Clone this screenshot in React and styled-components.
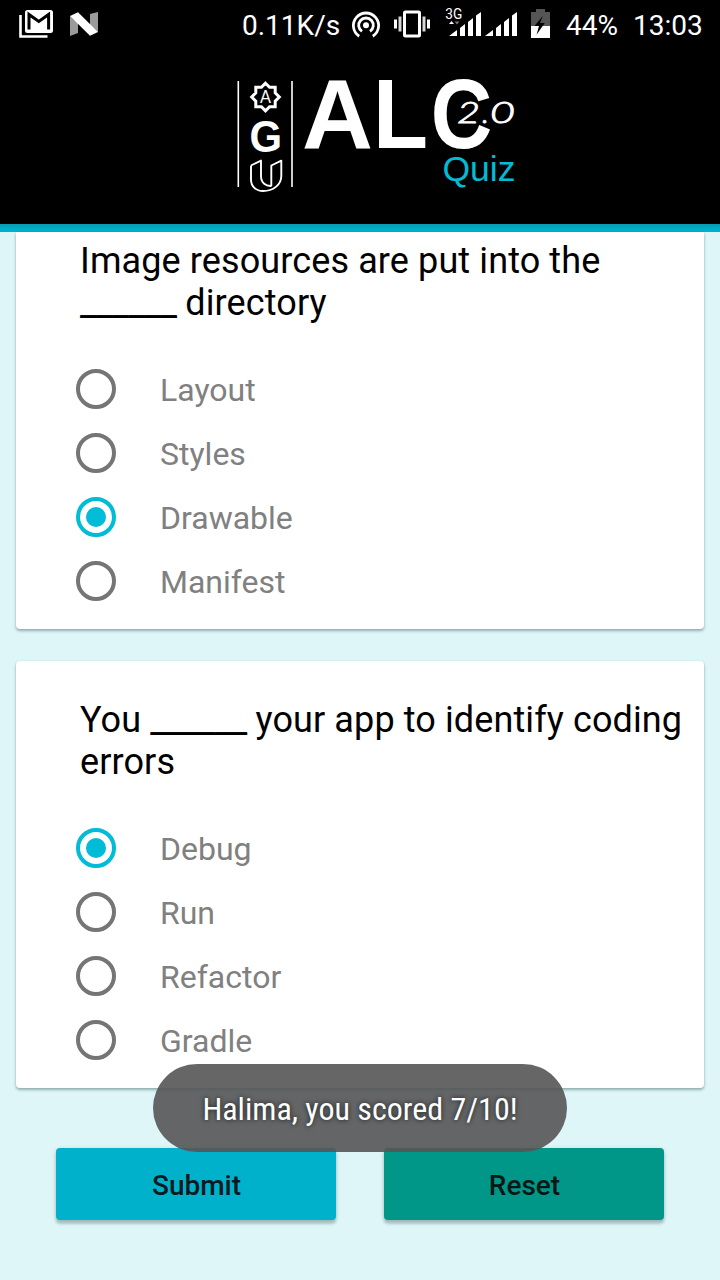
import React from 'react';
import styled, { createGlobalStyle } from 'styled-components';

const GlobalStyle = createGlobalStyle`
  * { box-sizing: border-box; }
  body { margin: 0; font-family: Roboto, "Liberation Sans", sans-serif; background: #dff6f8; }
`;

const Screen = styled.div`
  position: relative;
  width: 720px;
  height: 1280px;
  overflow: hidden;
  display: flex;
  flex-direction: column;
  background: #dff6f8;
`;

const StatusBar = styled.div`
  height: 48px;
  flex: none;
  background: #000;
  color: #fff;
  display: flex;
  align-items: center;
  justify-content: space-between;
  padding: 0 15px 0 18px;
`;

const StatusGroup = styled.div`
  display: flex;
  align-items: center;
  height: 48px;
`;

const StatusText = styled.span`
  font-size: 28px;
  line-height: 32px;
  padding-top: 3px;
  width: ${(p) => p.$width}px;
  margin-right: ${(p) => p.$gap || 0}px;
  white-space: nowrap;
`;

const StatusIcon = styled.svg`
  display: block;
  flex: none;
  height: 48px;
  margin-right: ${(p) => p.$gap || 0}px;
`;

const Header = styled.header`
  height: 176px;
  flex: none;
  background: #000;
  display: flex;
  justify-content: center;
  padding: 8px 0 0 32px;
`;

const AccentBar = styled.div`
  height: 8px;
  flex: none;
  background: linear-gradient(#079bb0, #00aec8 60%, #00b1cc);
`;

const Content = styled.main`
  display: flex;
  flex-direction: column;
  padding: 0 16px;
`;

const Card = styled.section`
  background: #fff;
  border-radius: ${(p) => (p.$scrolled ? '0 0 4px 4px' : '4px')};
  padding: ${(p) => (p.$scrolled ? 8 : 38)}px 16px 16px 64px;
  margin-bottom: ${(p) => p.$gap}px;
  box-shadow: 0 2px 3px rgba(0, 40, 45, 0.34), 0 0 2px rgba(0, 40, 45, 0.1);
`;

const Question = styled.h2`
  margin: 0 0 33px;
  font-size: 36px;
  font-weight: 400;
  line-height: 42px;
  letter-spacing: 0.11px;
  color: #000;
  white-space: pre-line;
`;

const Blank = styled.span`
  letter-spacing: -0.2px;
  text-shadow: 0.5px 0 0 #000;
`;

const Option = styled.label`
  display: flex;
  align-items: center;
  height: 64px;
  margin-left: -4px;
  gap: 44px;
  font-size: 32px;
  line-height: 38px;
  color: #808080;
`;

const OptionText = styled.span`
  padding-top: 2px;
`;

const Radio = styled.span`
  width: 40px;
  height: 40px;
  flex: none;
  border-radius: 50%;
  border: 4px solid ${(p) => (p.$checked ? '#00bcd6' : '#757575')};
  display: flex;
  align-items: center;
  justify-content: center;
`;

const RadioDot = styled.span`
  width: 20px;
  height: 20px;
  border-radius: 50%;
  background: #00bcd6;
`;

const Actions = styled.div`
  display: flex;
  gap: 48px;
  padding: 0 40px;
`;

const ActionButton = styled.button`
  width: 280px;
  height: 72px;
  padding: 3px 0 0 1px;
  border: 0;
  border-radius: 4px;
  background: ${(p) => p.$color};
  color: rgba(0, 0, 0, 0.87);
  font: 500 28px/32px Roboto, "Liberation Sans", sans-serif;
  box-shadow: 0 4px 3px rgba(0, 30, 35, 0.2), 0 1px 4px rgba(0, 30, 35, 0.16);
`;

const Toast = styled.div`
  position: absolute;
  left: 153px;
  top: 1064px;
  width: 414px;
  height: 88px;
  border-radius: 44px;
  background: rgba(85, 85, 85, 0.9);
  color: #fff;
  display: flex;
  align-items: center;
  justify-content: center;
  padding-top: 1px;
  font-family: "Roboto Condensed", Roboto, sans-serif;
  font-stretch: condensed;
  font-size: 32px;
  line-height: 38px;
  white-space: nowrap;
  text-shadow: 0 0 5px rgba(0, 0, 0, 0.75);
`;

const questions = [
  {
    before: 'Image resources are put into the\n',
    after: ' directory',
    options: ['Layout', 'Styles', 'Drawable', 'Manifest'],
    answer: 'Drawable',
    scrolled: true,
    gap: 32,
  },
  {
    before: 'You ',
    after: ' your app to identify coding\nerrors',
    options: ['Debug', 'Run', 'Refactor', 'Gradle'],
    answer: 'Debug',
    gap: 60,
  },
];

function MailIcon() {
  return (
    <StatusIcon width="36" viewBox="18 0 36 48" $gap={15}>
      <path d="M20.5 15V36.5H47.5" fill="none" stroke="#fff" strokeWidth="2.6" />
      <rect x="25" y="10" width="28" height="23" rx="2.5" fill="#fff" />
      <path d="M29 29.5V14.5L38.8 21.5L48.6 14.5V29.5" fill="none" stroke="#000" strokeWidth="3" />
    </StatusIcon>
  );
}

function NougatIcon() {
  return (
    <StatusIcon width="30" viewBox="69 0 30 48">
      <path d="M70 16L78 23V33L70 36ZM90 14L98 12V32L90 25Z" fill="#9b9b9b" />
      <path d="M70 16L78 12.3L98 32L90 35.8Z" fill="#fff" />
    </StatusIcon>
  );
}

function HotspotIcon() {
  return (
    <StatusIcon width="30" viewBox="351 0 30 48" $gap={12}>
      <g fill="none" stroke="#fff" strokeWidth="2.8">
        <path d="M359.2 36.2A12.6 12.6 0 1 1 372.8 36.2" />
        <path d="M362 31.4A7.3 7.3 0 1 1 370 31.4" />
      </g>
      <circle cx="366" cy="25.2" r="3" fill="#fff" />
    </StatusIcon>
  );
}

function VibrateIcon() {
  return (
    <StatusIcon width="38" viewBox="393 0 38 48" $gap={14}>
      <rect x="404.5" y="12" width="15" height="24" rx="1" fill="none" stroke="#fff" strokeWidth="3" />
      <path d="M395.5 19.5V28.5M428.5 19.5V28.5" stroke="#fff" strokeWidth="3" />
      <path d="M400 16.5V31.5M424 16.5V31.5" stroke="#d5d5d5" strokeWidth="3" />
    </StatusIcon>
  );
}

function SignalIcon() {
  return (
    <StatusIcon width="74" viewBox="445 0 74 48" $gap={12}>
      <text x="445.3" y="19.3" fill="#fff" fontSize="15.5" textLength="17" lengthAdjust="spacingAndGlyphs" fontFamily="Roboto, sans-serif">3G</text>
      <path d="M449 24L451.5 21L454 24Z" fill="#fff" />
      <path d="M454.5 21.5H459.5L457 24.5Z" fill="#777" />
      <g fill="#fff">
        <path d="M449 36L457 30V36ZM460 28L465 24V36H460ZM468 22L473 18V36H468ZM476 15.5L481 12V36H476Z" />
        <path d="M485 36L493 30V36ZM496 28L501 24V36H496ZM504 22L509 18V36H504ZM512 15.5L517 12V36H512Z" />
      </g>
    </StatusIcon>
  );
}

function BatteryIcon() {
  return (
    <StatusIcon width="19" viewBox="531 0 19 48" $gap={16}>
      <path d="M531 12H536V9H545V12H550V26H531Z" fill="#555" />
      <path d="M531 26H550V38H531Z" fill="#fff" />
      <path d="M542.8 16L534.5 26H539L536.5 34.8L544.8 23H540Z" fill="#000" />
    </StatusIcon>
  );
}

function Logo() {
  return (
    <svg width="280" height="138" viewBox="236 56 280 138">
      <path d="M238.3 81V187M292 81V187" stroke="#fff" strokeWidth="1.6" />
      <path
        transform="translate(265.5 97)"
        d="M0 -13.8L4.1 -9.7H9.7V-4.1L13.8 0L9.7 4.1V9.7H4.1L0 13.8L-4.1 9.7H-9.7V4.1L-13.8 0L-9.7 -4.1V-9.7H-4.1Z"
        fill="none"
        stroke="#fff"
        strokeWidth="3"
      />
      <text x="260" y="102.8" fill="#fff" fontFamily="Lato, sans-serif" fontSize="16.5" textLength="11" lengthAdjust="spacingAndGlyphs">A</text>
      <text x="249.6" y="152" fill="#fff" fontFamily="Liberation Sans" fontWeight="700" fontSize="44" textLength="32.6" lengthAdjust="spacingAndGlyphs">G</text>
      <g fill="none" stroke="#fff" strokeWidth="1.9" strokeLinejoin="round">
        <path d="M251 165.5L261 160.6V176C261 183 266 186.5 271.5 186" />
        <path d="M251 165.5V179.5C251 186.5 256 191 263 191C273 191 281.3 185 281.3 176V160.6L271.3 165.5V186" />
      </g>
      <g fill="#fff" fontFamily="Liberation Sans" fontWeight="700" fontSize="98">
        <text x="302" y="148.2" textLength="71" lengthAdjust="spacingAndGlyphs">A</text>
        <text x="373" y="148.2" textLength="55" lengthAdjust="spacingAndGlyphs">L</text>
        <text x="430.8" y="148.2" textLength="61.5" lengthAdjust="spacingAndGlyphs">C</text>
      </g>
      <g fill="#fff" stroke="#fff" strokeWidth="0.9" fontFamily="Lato, sans-serif" fontStyle="italic" fontWeight="300" fontSize="30">
        <text x="457" y="122.5" textLength="23" lengthAdjust="spacingAndGlyphs">2</text>
        <text x="482" y="122.5">.</text>
        <text x="490" y="122.5" textLength="25" lengthAdjust="spacingAndGlyphs">0</text>
      </g>
      <text x="442.5" y="181" fill="#00bcd6" fontFamily="Liberation Sans" fontSize="35.5" textLength="73" lengthAdjust="spacingAndGlyphs">Quiz</text>
    </svg>
  );
}

function QuestionCard({ question }) {
  return (
    <Card $scrolled={question.scrolled} $gap={question.gap}>
      <Question>
        {question.before}
        <Blank>______</Blank>
        {question.after}
      </Question>
      {question.options.map((option) => {
        const checked = option === question.answer;
        return (
          <Option key={option}>
            <Radio $checked={checked}>{checked && <RadioDot />}</Radio>
            <OptionText>{option}</OptionText>
          </Option>
        );
      })}
    </Card>
  );
}

export default function App() {
  return (
    <Screen>
      <GlobalStyle />
      <StatusBar>
        <StatusGroup>
          <MailIcon />
          <NougatIcon />
        </StatusGroup>
        <StatusGroup>
          <StatusText $width={98} $gap={11}>0.11K/s</StatusText>
          <HotspotIcon />
          <VibrateIcon />
          <SignalIcon />
          <BatteryIcon />
          <StatusText $width={52} $gap={15}>44%</StatusText>
          <StatusText $width={72}>13:03</StatusText>
        </StatusGroup>
      </StatusBar>
      <Header>
        <Logo />
      </Header>
      <AccentBar />
      <Content>
        {questions.map((question) => (
          <QuestionCard key={question.answer} question={question} />
        ))}
        <Actions>
          <ActionButton $color="#00b1cc">Submit</ActionButton>
          <ActionButton $color="#009788">Reset</ActionButton>
        </Actions>
      </Content>
      <Toast>Halima, you scored 7/10!</Toast>
    </Screen>
  );
}
